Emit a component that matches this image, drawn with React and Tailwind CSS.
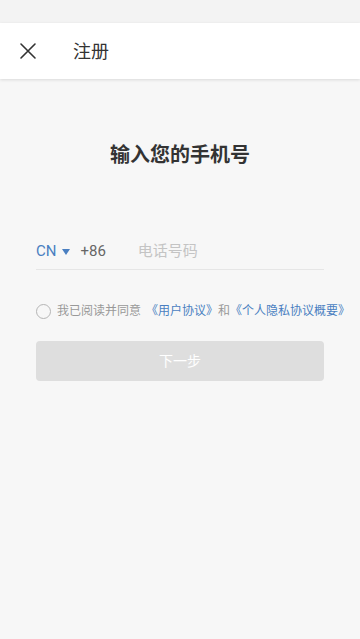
import { useState } from "react";

const font = { fontFamily: '"Roboto", "Noto Sans CJK SC", sans-serif' };

export default function App() {
  const [phone, setPhone] = useState("");
  const [agreed, setAgreed] = useState(false);

  return (
    <div className="w-[360px] h-[639px] bg-[#f7f7f7] flex flex-col" style={font}>
      {/* status bar */}
      <div className="h-[23px] bg-[#f3f3f3]"></div>

      {/* header */}
      <div className="h-[56px] bg-white flex items-center shadow-[0_1px_3px_rgba(0,0,0,0.12)] relative z-10">
        <button className="w-[56px] h-full flex items-center justify-center">
          <svg width="18" height="18" viewBox="0 0 18 18" fill="none" stroke="#333" strokeWidth="1.6" strokeLinecap="round">
            <path d="M2 2 L16 16 M16 2 L2 16" />
          </svg>
        </button>
        <span className="ml-[17px] text-[18px] text-[#333]">注册</span>
      </div>

      {/* body */}
      <div className="flex flex-col px-[36px]">
        <h1 className="mt-[63px] text-center text-[20px] font-bold text-[#333] leading-[26px]">输入您的手机号</h1>

        <div className="mt-[62px] h-[40px] pt-[4px] flex items-center border-b border-[#e6e6e6]">
          <span className="shrink-0 text-[15px] text-[#4a7fc1]">CN</span>
          <span className="shrink-0 ml-[6px] w-0 h-0 border-l-[4.5px] border-r-[4.5px] border-t-[6px] border-l-transparent border-r-transparent border-t-[#4a7fc1]"></span>
          <span className="shrink-0 ml-[10px] text-[15px] text-[#666]">+86</span>
          <input
            className="ml-[32px] min-w-0 flex-1 bg-transparent text-[15px] text-[#333] placeholder-[#c4c4c4] outline-none"
            placeholder="电话号码"
            value={phone}
            onChange={(e) => setPhone(e.target.value)}
          />
        </div>

        <div className="mt-[32px] flex items-center text-[12px] whitespace-nowrap">
          <button
            onClick={() => setAgreed(!agreed)}
            className={"w-[15px] h-[15px] rounded-full border border-[#b5b5b5] shrink-0 " + (agreed ? "bg-[#4a7fc1]" : "")}
          ></button>
          <span className="ml-[6px] text-[#999]">我已阅读并同意</span>
          <span className="ml-[5px] text-[#4a7fc1]">《用户协议》</span>
          <span className="text-[#999]">和</span>
          <span className="text-[#4a7fc1]">《个人隐私协议概要》</span>
        </div>

        <button className="mt-[21px] h-[40px] rounded-[4px] bg-[#dedede] text-white text-[14px]">下一步</button>
      </div>
    </div>
  );
}
